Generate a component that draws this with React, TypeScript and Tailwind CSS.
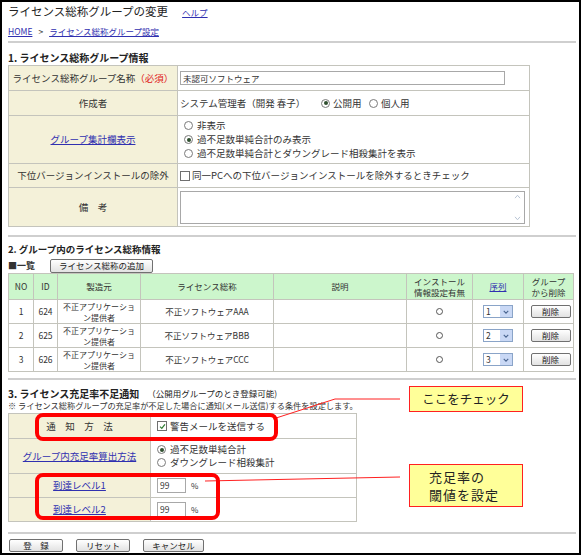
import React from 'react';
import clsx from 'clsx';

function Radio({ checked }: { checked?: boolean }) {
  return (
    <span className="inline-flex items-center justify-center w-[9px] h-[9px] rounded-full border border-[#7a7a7a] bg-white shrink-0">
      {checked && <span className="w-[4px] h-[4px] rounded-full bg-[#2f4f2f]" />}
    </span>
  );
}

function Check({ checked }: { checked?: boolean }) {
  return (
    <span className="inline-flex items-center justify-center w-[10px] h-[10px] border border-[#6f6f6f] bg-white shrink-0">
      {checked && (
        <svg viewBox="0 0 8 8" className="w-[7px] h-[7px]">
          <path d="M1.2 4.2 L3.2 6.2 L6.8 1.6" stroke="#2e7d32" strokeWidth="1.4" fill="none" />
        </svg>
      )}
    </span>
  );
}

function Btn({ children, className }: { children: React.ReactNode; className?: string }) {
  return (
    <span
      className={clsx(
        'inline-flex items-center justify-center h-[13px] border border-[#707070] rounded-[2px] bg-linear-to-b from-white to-[#e2e2e2] text-[8.5px] leading-none text-[#222]',
        className
      )}
    >
      {children}
    </span>
  );
}

function Select({ value }: { value: string }) {
  return (
    <span className="inline-flex h-[13px] w-[30px] border border-[#8aa4c8] bg-white">
      <span className="flex-1 text-[8.5px] leading-[11px] pl-[2px] text-left">{value}</span>
      <span className="w-[12px] bg-[#c9d8f5] flex items-center justify-center">
        <svg viewBox="0 0 8 8" className="w-[6px] h-[6px]">
          <path d="M1 2.5 L4 5.5 L7 2.5" stroke="#4a6590" strokeWidth="1.5" fill="none" />
        </svg>
      </span>
    </span>
  );
}

const label = 'bg-[#f4f1d9] border border-[#c4c4bc] text-center text-[9.5px] text-[#333]';
const cell = 'bg-white border border-[#c4c4bc] text-[9.5px] text-[#333] px-[2px]';
const link = 'text-[#3030b0] underline';

const rows = [
  { no: '1', id: '624', name: '不正ソフトウェアAAA', order: '1' },
  { no: '2', id: '625', name: '不正ソフトウェアBBB', order: '2' },
  { no: '3', id: '626', name: '不正ソフトウェアCCC', order: '3' },
];

export default function App() {
  return (
    <div className="relative w-[584px] h-[555px] bg-white overflow-hidden font-['Noto_Sans_CJK_JP','Noto_Sans',sans-serif] text-[#333]">
      <div className="w-[581px] h-[555px] border-2 border-black pl-[6px] pr-[3px]">
        {/* header */}
        <div className="h-[20px] flex items-center gap-[14px]">
          <span className="text-[11.5px] text-[#222]">ライセンス総称グループの変更</span>
          <span className={clsx('text-[8.5px]', link)}>ヘルプ</span>
        </div>
        <div className="h-[19px] flex items-center gap-[6px] text-[8.5px]">
          <span className={link}>HOME</span>
          <span>&gt;</span>
          <span className={link}>ライセンス総称グループ設定</span>
        </div>
        <div className="h-[2px] bg-[#cfcfcf]" />

        {/* section 1 */}
        <div className="h-[22px] pt-[6px] flex items-center text-[10px] font-bold text-[#222]">
          1. ライセンス総称グループ情報
        </div>
        <table className="w-[522px] table-fixed border-collapse">
          <colgroup>
            <col className="w-[169px]" />
            <col />
          </colgroup>
          <tbody>
            <tr className="h-[25px]">
              <td className={label}>
                ライセンス総称グループ名称<span className="text-[#e02020]">（必須）</span>
              </td>
              <td className={cell}>
                <div className="w-[325px] h-[14px] border border-[#a8a8a8] text-[8.5px] leading-[12px] pl-[2px]">
                  未認可ソフトウェア
                </div>
              </td>
            </tr>
            <tr className="h-[25px]">
              <td className={label}>作成者</td>
              <td className={cell}>
                <div className="flex items-center">
                  <span className="w-[141px]">システム管理者（開発 春子）</span>
                  <Radio checked />
                  <span className="ml-[3px] w-[36px]">公開用</span>
                  <Radio />
                  <span className="ml-[3px]">個人用</span>
                </div>
              </td>
            </tr>
            <tr className="h-[48px]">
              <td className={label}>
                <span className={link}>グループ集計欄表示</span>
              </td>
              <td className={clsx(cell, 'pl-[6px]')}>
                <div className="flex flex-col gap-[3px] leading-[11px]">
                  <div className="flex items-center gap-[4px]">
                    <Radio />
                    非表示
                  </div>
                  <div className="flex items-center gap-[4px]">
                    <Radio checked />
                    過不足数単純合計のみ表示
                  </div>
                  <div className="flex items-center gap-[4px]">
                    <Radio />
                    過不足数単純合計とダウングレード相殺集計を表示
                  </div>
                </div>
              </td>
            </tr>
            <tr className="h-[24px]">
              <td className={label}>下位バージョンインストールの除外</td>
              <td className={cell}>
                <div className="flex items-center gap-[2px]">
                  <Check />
                  同一PCへの下位バージョンインストールを除外するときチェック
                </div>
              </td>
            </tr>
            <tr className="h-[39px]">
              <td className={label}>備　考</td>
              <td className={cell}>
                <div className="w-[345px] h-[33px] border border-[#a8a8a8] flex justify-end">
                  <div className="w-[13px] flex flex-col justify-between items-center py-[2px] text-[#b8c4d4]">
                    <svg viewBox="0 0 8 6" className="w-[7px] h-[5px]">
                      <path d="M1 5 L4 1.5 L7 5" stroke="currentColor" strokeWidth="1.2" fill="none" />
                    </svg>
                    <svg viewBox="0 0 8 6" className="w-[7px] h-[5px]">
                      <path d="M1 1 L4 4.5 L7 1" stroke="currentColor" strokeWidth="1.2" fill="none" />
                    </svg>
                  </div>
                </div>
              </td>
            </tr>
          </tbody>
        </table>
        <div className="h-[2px] bg-[#cfcfcf] mt-[8px]" />

        {/* section 2 */}
        <div className="h-[21px] pt-[4px] flex items-center text-[9.5px] font-bold text-[#222]">
          2. グループ内のライセンス総称情報
        </div>
        <div className="h-[15px] flex items-center">
          <span className="text-[9px] font-bold w-[42px]">■一覧</span>
          <Btn className="w-[103px] h-[14px]">ライセンス総称の追加</Btn>
        </div>
        <table className="w-[565px] table-fixed border-collapse text-center">
          <colgroup>
            <col className="w-[25px]" />
            <col className="w-[24px]" />
            <col className="w-[83px]" />
            <col className="w-[133px]" />
            <col className="w-[133px]" />
            <col className="w-[66px]" />
            <col className="w-[51px]" />
            <col className="w-[50px]" />
          </colgroup>
          <thead>
            <tr className="h-[26px] bg-[#ccf6cc] text-[8.5px] leading-[11px] text-[#333]">
              <th className="font-normal border border-[#c4c4bc]">NO</th>
              <th className="font-normal border border-[#c4c4bc]">ID</th>
              <th className="font-normal border border-[#c4c4bc]">製造元</th>
              <th className="font-normal border border-[#c4c4bc]">ライセンス総称</th>
              <th className="font-normal border border-[#c4c4bc]">説明</th>
              <th className="font-normal border border-[#c4c4bc]">
                インストール
                <br />
                情報設定有無
              </th>
              <th className="font-normal border border-[#c4c4bc]">
                <span className={link}>序列</span>
              </th>
              <th className="font-normal border border-[#c4c4bc]">
                グループ
                <br />
                から削除
              </th>
            </tr>
          </thead>
          <tbody className="text-[8.5px] leading-[11px]">
            {rows.map((r) => (
              <tr key={r.id} className="h-[24px]">
                <td className="border border-[#c4c4bc]">{r.no}</td>
                <td className="border border-[#c4c4bc]">{r.id}</td>
                <td className="border border-[#c4c4bc] text-[8px]">
                  不正アプリケーショ
                  <br />
                  ン提供者
                </td>
                <td className="border border-[#c4c4bc]">{r.name}</td>
                <td className="border border-[#c4c4bc]"></td>
                <td className="border border-[#c4c4bc]">
                  <span className="inline-block w-[7px] h-[7px] rounded-full border border-[#555]" />
                </td>
                <td className="border border-[#c4c4bc]">
                  <div className="flex justify-center">
                    <Select value={r.order} />
                  </div>
                </td>
                <td className="border border-[#c4c4bc]">
                  <div className="flex justify-center pl-[4px]">
                    <Btn className="w-[40px] h-[12px]">削除</Btn>
                  </div>
                </td>
              </tr>
            ))}
          </tbody>
        </table>
        <div className="h-[2px] bg-[#cfcfcf] mt-[6px]" />

        {/* section 3 */}
        <div className="h-[20px] pt-[6px] flex items-center gap-[8px] text-[#222]">
          <span className="text-[10px] font-bold">3. ライセンス充足率不足通知</span>
          <span className="text-[8.5px]">（公開用グループのとき登録可能)</span>
        </div>
        <div className="h-[11px] flex items-center text-[8.2px] text-[#333]">
          ※ ライセンス総称グループの充足率が不足した場合に通知(メール送信)する条件を設定します。
        </div>
        <table className="w-[349px] table-fixed border-collapse mt-[2px]">
          <colgroup>
            <col className="w-[142px]" />
            <col />
          </colgroup>
          <tbody>
            <tr className="h-[25px]">
              <td className={label}>通　知　方　法</td>
              <td className={clsx(cell, 'pl-[6px]')}>
                <div className="flex items-center gap-[3px]">
                  <Check checked />
                  警告メールを送信する
                </div>
              </td>
            </tr>
            <tr className="h-[35px]">
              <td className={label}>
                <span className={link}>グループ内充足率算出方法</span>
              </td>
              <td className={clsx(cell, 'pl-[6px]')}>
                <div className="flex flex-col gap-[2px] leading-[11px]">
                  <div className="flex items-center gap-[4px]">
                    <Radio checked />
                    過不足数単純合計
                  </div>
                  <div className="flex items-center gap-[4px]">
                    <Radio />
                    ダウングレード相殺集計
                  </div>
                </div>
              </td>
            </tr>
            {['到達レベル1', '到達レベル2'].map((t) => (
              <tr key={t} className="h-[24px]">
                <td className={label}>
                  <span className={link}>{t}</span>
                </td>
                <td className={clsx(cell, 'pl-[6px]')}>
                  <div className="flex items-center gap-[5px]">
                    <span className="w-[29px] h-[15px] border border-[#a8a8a8] text-[8.5px] leading-[13px] pl-[2px]">99</span>
                    <span className="text-[8px]">%</span>
                  </div>
                </td>
              </tr>
            ))}
          </tbody>
        </table>
        <div className="h-[2px] bg-[#cfcfcf] mt-[10px]" />

        <div className="flex items-center gap-[13px] mt-[5px] pl-[1px]">
          <Btn className="w-[54px]">登　録</Btn>
          <Btn className="w-[54px]">リセット</Btn>
          <Btn className="w-[61px]">キャンセル</Btn>
        </div>
      </div>

      {/* annotations */}
      <svg className="absolute left-0 top-0 w-[584px] h-[555px] pointer-events-none" viewBox="0 0 584 555">
        <polyline points="273,419 335,399 400,399" stroke="#ff2020" strokeWidth="1" fill="none" />
        <line x1="205" y1="481" x2="400" y2="477" stroke="#ff2020" strokeWidth="1" />
      </svg>
      <div className="absolute left-[35px] top-[413px] w-[243px] h-[28px] border-[4px] border-[#ff0000] rounded-[8px]" />
      <div className="absolute left-[35px] top-[473px] w-[185px] h-[47px] border-[4px] border-[#ff0000] rounded-[8px]" />
      <div className="absolute left-[409px] top-[386px] w-[114px] h-[26px] border border-[#ff2020] bg-[#ffff99] flex items-center justify-center text-[12.5px] text-[#222]">
        ここをチェック
      </div>
      <div className="absolute left-[409px] top-[464px] w-[114px] h-[43px] border border-[#ff2020] bg-[#ffff99] pl-[19px] pt-[3px] text-[13px] leading-[18px] tracking-[1px] text-[#222]">
        充足率の
        <br />
        閾値を設定
      </div>
    </div>
  );
}
